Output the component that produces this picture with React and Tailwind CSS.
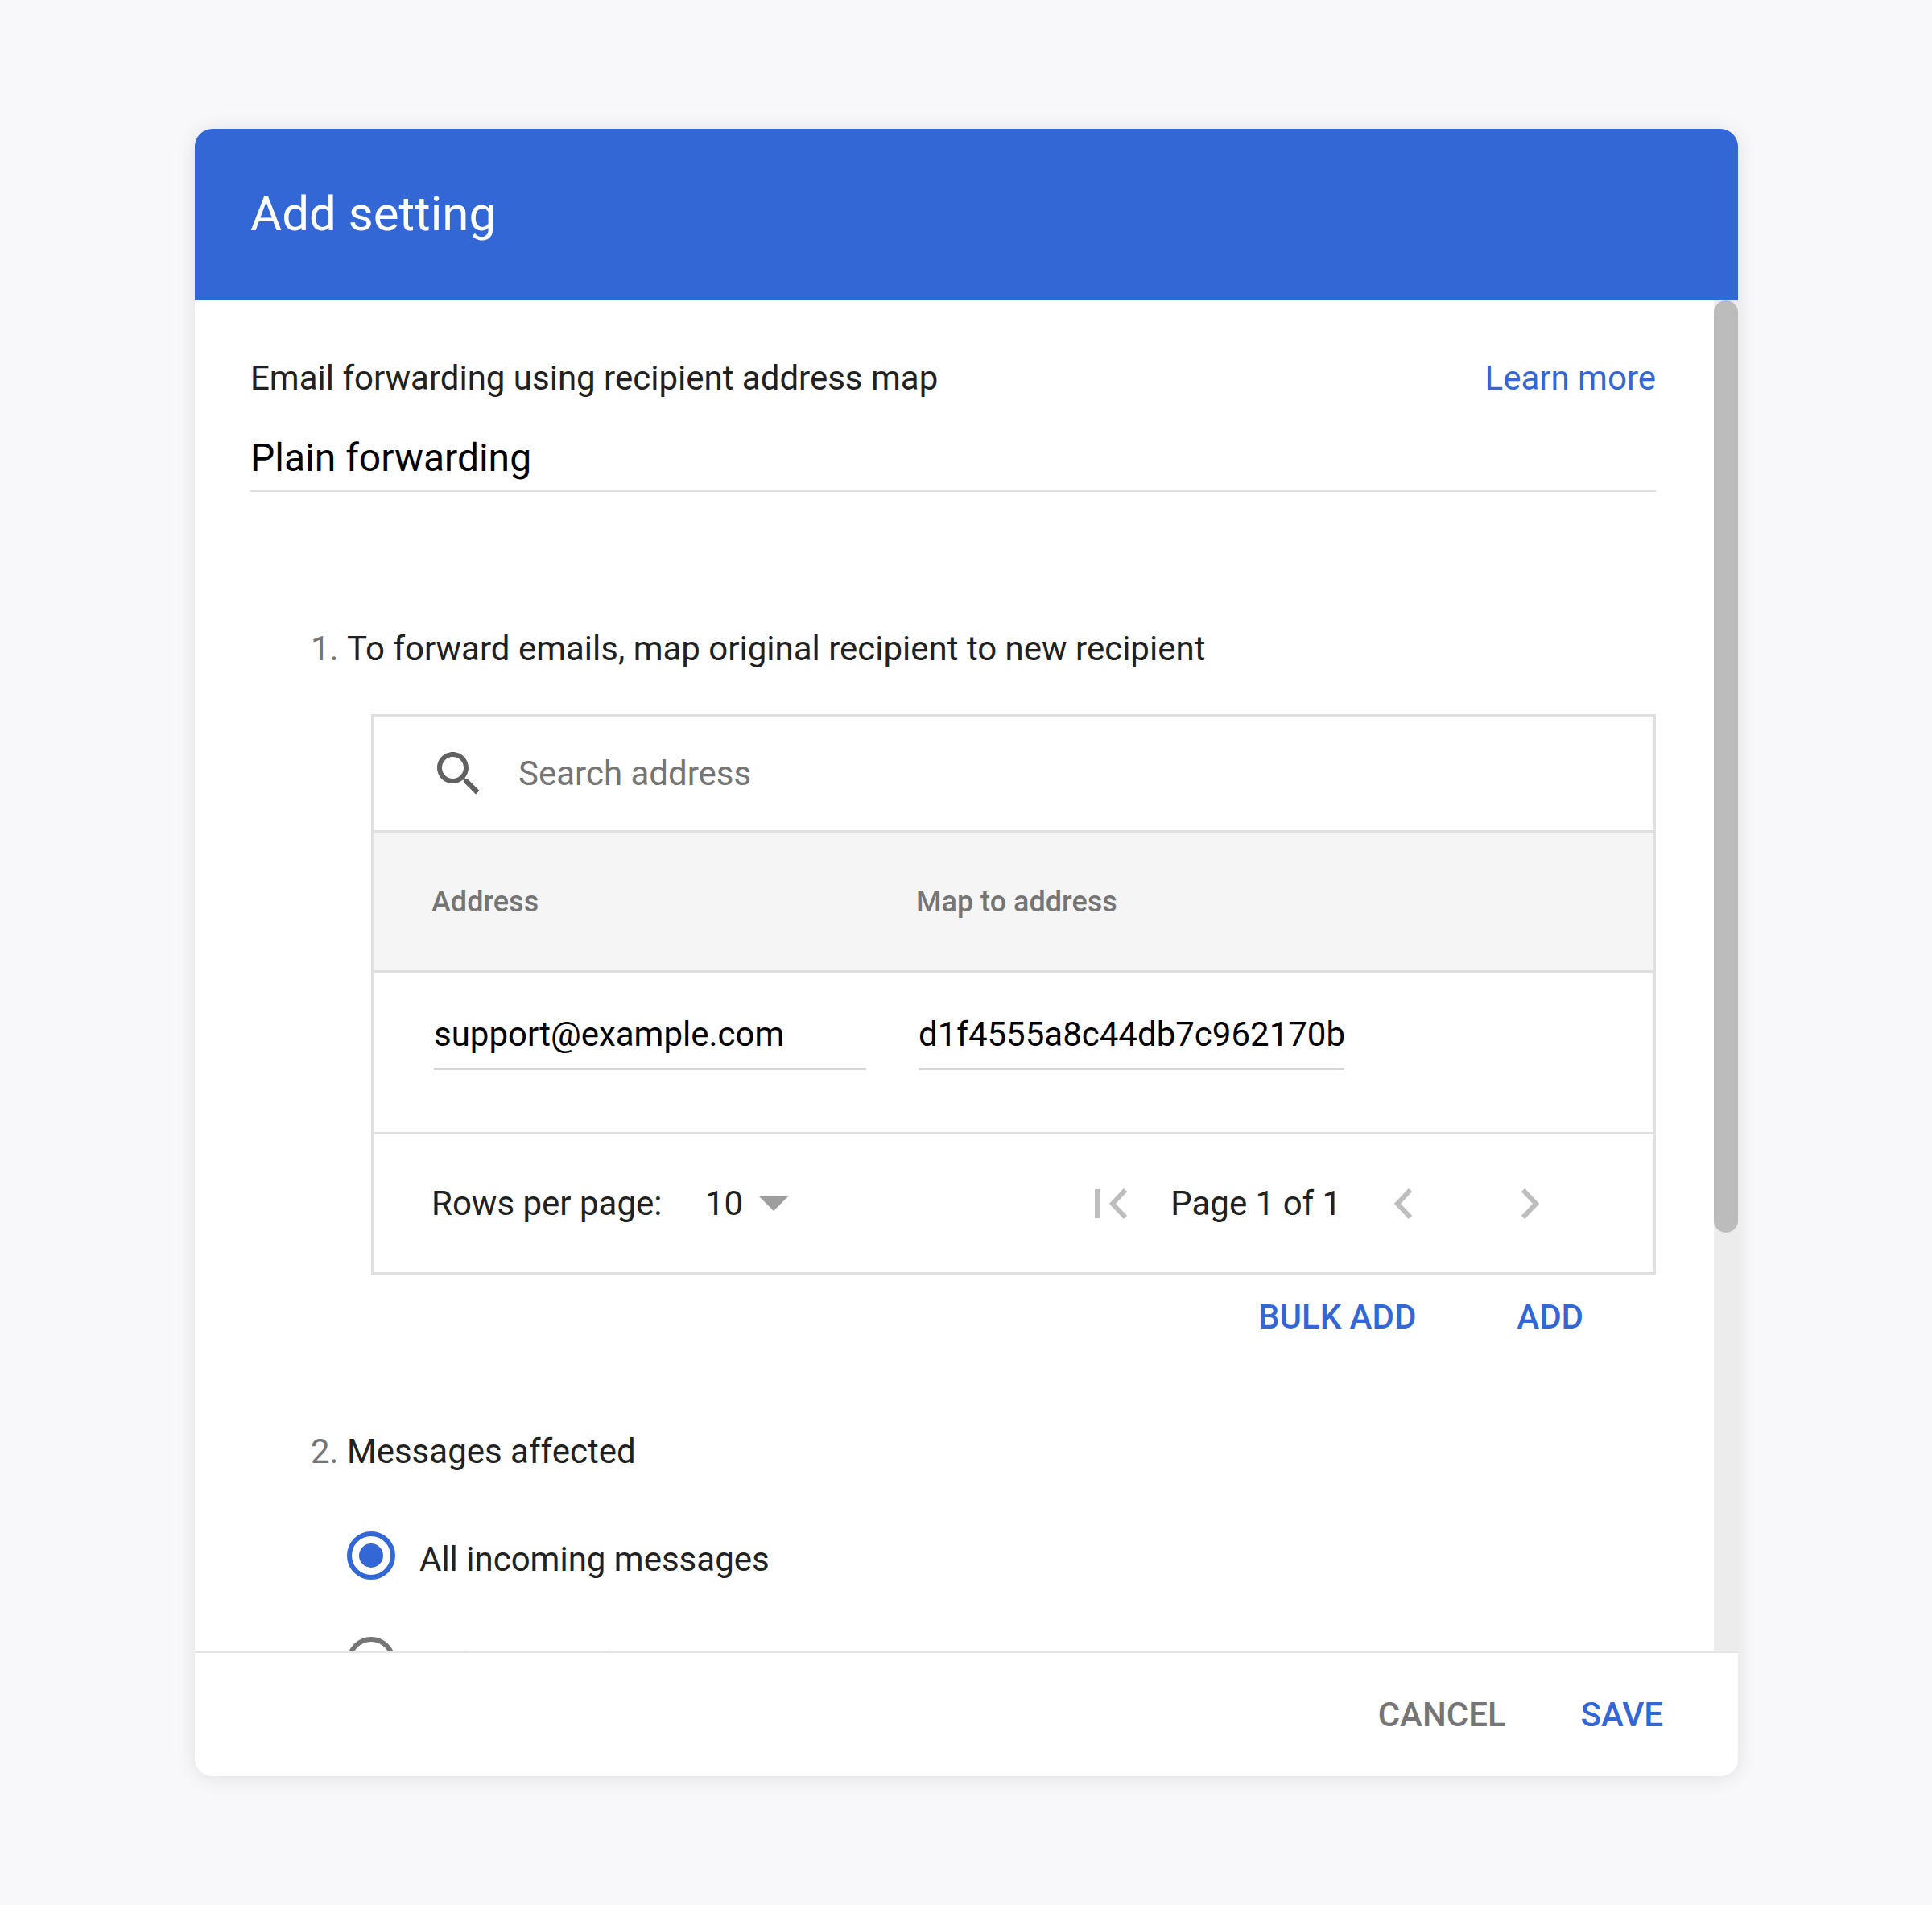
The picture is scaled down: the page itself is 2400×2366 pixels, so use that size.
import React from 'react';

const roboto = 'font-["Roboto",sans-serif]';

const Radio = ({ checked }) => (
  <span className={`flex h-[60px] w-[60px] shrink-0 items-center justify-center rounded-full border-[6px] ${checked ? 'border-[#3367d6]' : 'border-[#757575]'}`}>
    {checked && <span className="h-[30px] w-[30px] rounded-full bg-[#3367d6]" />}
  </span>
);

const App = () => {
  return (
    <div className={`min-h-[2366px] bg-[#f8f8fa] pt-[160px] pl-[242px] ${roboto}`}>
      <div className="flex h-[2046px] w-[1917px] flex-col overflow-hidden rounded-[22px] bg-white shadow-[0_2px_24px_rgba(0,0,0,0.1)]">
        <header className="flex h-[213px] shrink-0 items-center bg-[#3367d6] pl-[69px] pb-[2px]">
          <h1 className="text-[60px] leading-none font-normal text-white">Add setting</h1>
        </header>

        <div className="flex h-[1677px] shrink-0 overflow-hidden">
          <div className="w-[1887px] shrink-0 pl-[69px] pr-[72px]">
            <div className="flex items-center justify-between pt-[72px] text-[42px] leading-[50px] text-[#212121]">
              <span>Email forwarding using recipient address map</span>
              <a className="text-[#3367d6]">Learn more</a>
            </div>
            <div className="mt-[38px] h-[78px] border-b-[3px] border-[#dedede] text-[48px] leading-[72px] text-black">Plain forwarding</div>

            <div className="mt-[170px] flex text-[42px] leading-[50px] text-[#212121]">
              <span className="w-[45px] pl-0 -ml-[0px] text-[#757575] translate-x-[75px]">1.</span>
              <span className="ml-[75px]">To forward emails, map original recipient to new recipient</span>
            </div>

            <div className="mt-[56px] ml-[150px] flex h-[696px] flex-col border-[3px] border-[#e0e0e0]">
              <div className="flex h-[141px] shrink-0 items-center pl-[70px]">
                <svg width="72" height="72" viewBox="0 0 24 24" fill="#616161"><path d="M15.5 14h-.79l-.28-.27C15.41 12.59 16 11.11 16 9.5 16 5.91 13.09 3 9.5 3S3 5.91 3 9.5 5.91 16 9.5 16c1.61 0 3.09-.59 4.23-1.57l.27.28v.79l5 4.99L20.49 19l-4.99-5zm-6 0C7.01 14 5 11.99 5 9.5S7.01 5 9.5 5 14 7.01 14 9.5 11.99 14 9.5 14z" /></svg>
                <span className="ml-[38px] text-[42px] text-[#757575]">Search address</span>
              </div>
              <div className="flex h-[177px] shrink-0 items-center border-y-[3px] border-[#e0e0e0] bg-[#f5f5f5] text-[36px] font-medium text-[#757575]">
                <span className="ml-[72px] w-[602px]">Address</span>
                <span>Map to address</span>
              </div>
              <div className="flex h-[198px] shrink-0 items-start text-[42px] text-black">
                <div className="mt-[50px] ml-[75px] h-[71px] w-[537px] border-b-[3px] border-[#d6d6d6] leading-[54px]">support@example.com</div>
                <div className="mt-[50px] ml-[65px] h-[71px] w-[529px] border-b-[3px] border-[#d6d6d6] leading-[54px]">d1f4555a8c44db7c962170b</div>
              </div>
              <div className="flex flex-1 items-center border-t-[3px] border-[#e0e0e0] text-[42px] text-[#212121]">
                <span className="ml-[72px] w-[340px]">Rows per page:</span>
                <span>10</span>
                <svg className="ml-[20px]" width="36" height="18" viewBox="0 0 36 18" fill="#9e9e9e"><path d="M0 0h36L18 18z" /></svg>
                <svg className="ml-[381px]" width="42" height="40" viewBox="0 0 42 40" fill="none" stroke="#bdbdbd" strokeWidth="6"><path d="M3 2v36" /><path d="M38 3 22 20l16 17" /></svg>
                <span className="ml-[52px]">Page 1 of 1</span>
                <svg className="ml-[66px]" width="24" height="40" viewBox="0 0 24 40" fill="none" stroke="#bdbdbd" strokeWidth="6"><path d="M20 3 4 20l16 17" /></svg>
                <svg className="ml-[132px]" width="24" height="40" viewBox="0 0 24 40" fill="none" stroke="#bdbdbd" strokeWidth="6"><path d="M4 3l16 17L4 37" /></svg>
              </div>
            </div>

            <div className="mt-[28px] flex justify-end pr-[90px] text-[42px] leading-[50px] font-medium text-[#3367d6]">
              <span>BULK ADD</span>
              <span className="ml-[125px]">ADD</span>
            </div>

            <div className="mt-[117px] flex text-[42px] leading-[50px] text-[#212121]">
              <span className="ml-[75px] w-[45px] text-[#757575]">2.</span>
              <span>Messages affected</span>
            </div>

            <div className="mt-[72px] ml-[120px] flex items-center text-[42px] text-[#212121]">
              <Radio checked />
              <span className="ml-[30px] translate-y-[5px]">All incoming messages</span>
            </div>
            <div className="mt-[68px] ml-[120px] flex items-center text-[42px] text-[#212121]">
              <Radio />
              <span className="ml-[30px] translate-y-[5px]">Only external incoming messages</span>
            </div>
          </div>
          <div className="w-[30px] shrink-0 bg-[#ececec]">
            <div className="h-[1158px] rounded-full bg-[#bcbcbc]" />
          </div>
        </div>

        <footer className="flex flex-1 items-center justify-end border-t-[3px] border-[#e4e4e4] bg-white pr-[93px] text-[42px] font-medium">
          <span className="text-[#757575]">CANCEL</span>
          <span className="ml-[93px] text-[#3367d6]">SAVE</span>
        </footer>
      </div>
    </div>
  );
};

export default App;
